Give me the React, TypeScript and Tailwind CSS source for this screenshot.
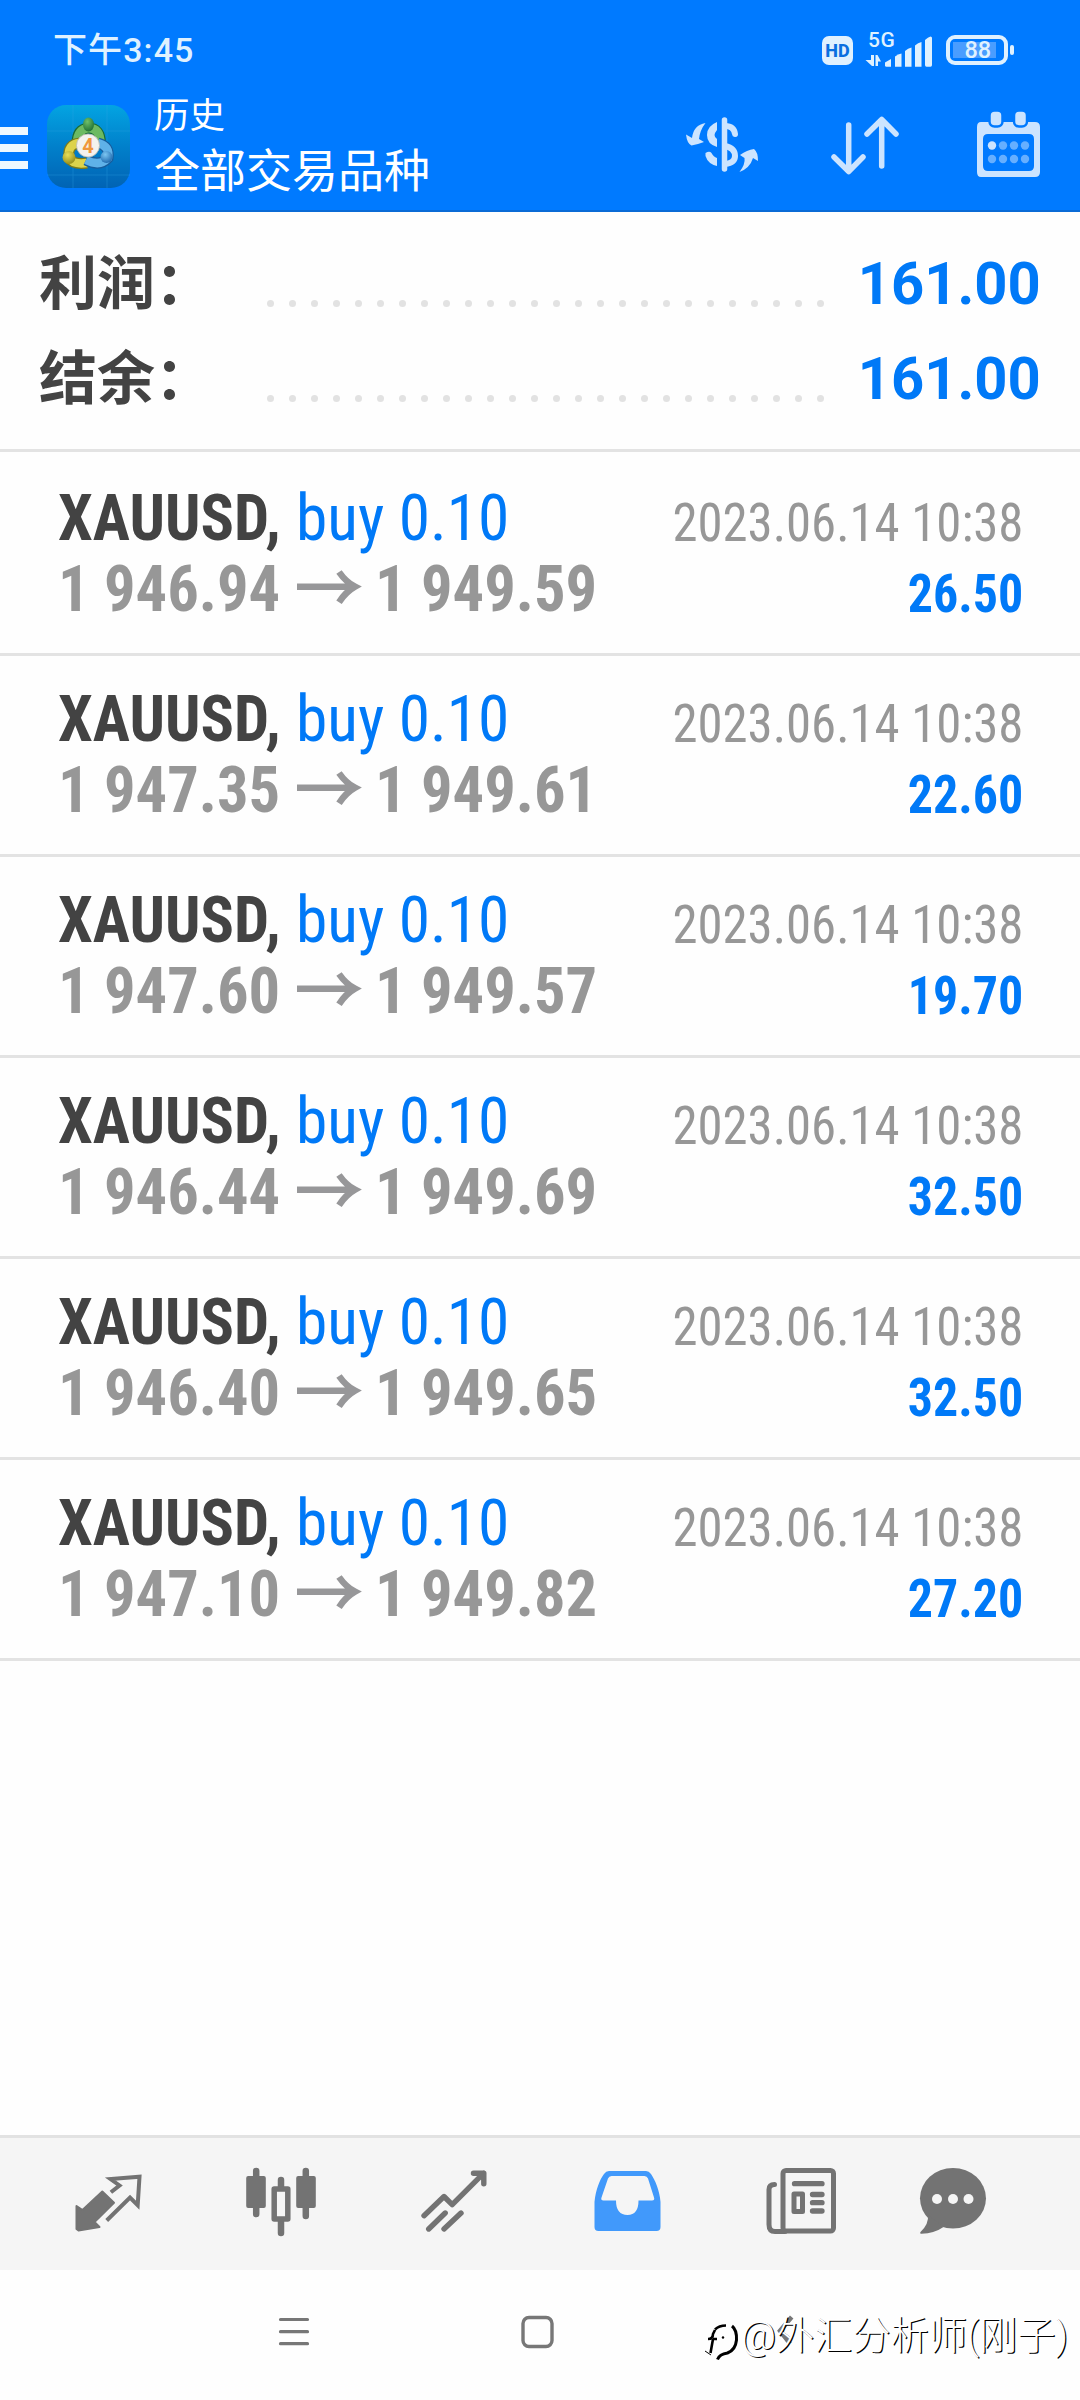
import { ReactNode } from 'react';

interface Deal {
  symbol: string;
  volume: string;
  open: string;
  close: string;
  time: string;
  profit: string;
}

const deals: Deal[] = [
  { symbol: 'XAUUSD', volume: 'buy 0.10', open: '1 946.94', close: '1 949.59', time: '2023.06.14 10:38', profit: '26.50' },
  { symbol: 'XAUUSD', volume: 'buy 0.10', open: '1 947.35', close: '1 949.61', time: '2023.06.14 10:38', profit: '22.60' },
  { symbol: 'XAUUSD', volume: 'buy 0.10', open: '1 947.60', close: '1 949.57', time: '2023.06.14 10:38', profit: '19.70' },
  { symbol: 'XAUUSD', volume: 'buy 0.10', open: '1 946.44', close: '1 949.69', time: '2023.06.14 10:38', profit: '32.50' },
  { symbol: 'XAUUSD', volume: 'buy 0.10', open: '1 946.40', close: '1 949.65', time: '2023.06.14 10:38', profit: '32.50' },
  { symbol: 'XAUUSD', volume: 'buy 0.10', open: '1 947.10', close: '1 949.82', time: '2023.06.14 10:38', profit: '27.20' },
];

const summary = [
  { label: '利润：', value: '161.00' },
  { label: '结余：', value: '161.00' },
];

function StatusBar() {
  return (
    <div className="flex h-[88px] items-center pt-3 pl-[53px] pr-[65px] text-[#dff1ff]">
      <span className="text-[34px] leading-none font-medium tracking-[1.1px]">下午3:45</span>
      <div className="ml-auto flex items-center">
        <div className="flex h-[29px] w-[31px] items-center justify-center rounded-[7px] bg-[#dff1ff] text-[18px] font-extrabold text-[#0a6fe0]">
          HD
        </div>
        <svg width="70" height="52" viewBox="864 22 70 52" className="ml-[11px]" fill="#dff1ff">
          <text x="868" y="45" fontSize="21" fontFamily="Roboto, sans-serif" fontWeight="500" letterSpacing="0.500">5G</text>
          <path d="M871 53h3v11h-2l-6.500-6h5.500z M875.500 53h2l3.500 6.500h-3v4.500h-2.500z" />
          <path d="M885 60.500l6-3.500v7.700h-4.500q-1.500 0-1.500-1.500z" />
          <path d="M895 54.500q3-2.500 6.500-3v13.200h-6.500z" />
          <path d="M905 49q3-3 6.500-3.500v19.200h-6.500z" />
          <path d="M915 43.500q3-3 6.500-3.500v24.700h-6.500z" />
          <path d="M925 38q3-3 5.500-3.500q1.500 0 1.500 1.500v27q0 1.700-1.500 1.700h-4q-1.500 0-1.500-1.700z" />
        </svg>
        <svg width="70" height="32" viewBox="945 33 70 32" className="ml-[11px]">
          <rect x="948" y="36" width="58" height="26" rx="7" fill="none" stroke="#dff1ff" strokeWidth="4" />
          <rect x="953" y="41" width="43" height="16" fill="#4a9dff" />
          <rect x="1010" y="44" width="4" height="10" rx="2" fill="#dff1ff" />
          <text x="964.500" y="57.300" fontSize="23.500" fontFamily="Roboto, sans-serif" fontWeight="500" fill="#dff1ff">88</text>
        </svg>
      </div>
    </div>
  );
}

function AppLogo() {
  return (
    <svg width="84" height="84" viewBox="46 105 84 84">
      <defs>
        <linearGradient id="logoBg" x1="0" y1="0" x2="0" y2="1">
          <stop offset="0" stopColor="#03a4e2" />
          <stop offset="0.500" stopColor="#0180cb" />
          <stop offset="1" stopColor="#0163b4" />
        </linearGradient>
        <radialGradient id="logoGreen" cx="0.400" cy="0.300" r="0.800">
          <stop offset="0" stopColor="#6fc06a" />
          <stop offset="1" stopColor="#17682f" />
        </radialGradient>
        <radialGradient id="logoYellow" cx="0.400" cy="0.300" r="0.800">
          <stop offset="0" stopColor="#e8df5a" />
          <stop offset="1" stopColor="#8c8412" />
        </radialGradient>
        <radialGradient id="logoBlue" cx="0.400" cy="0.300" r="0.800">
          <stop offset="0" stopColor="#7cc6f2" />
          <stop offset="1" stopColor="#1560a8" />
        </radialGradient>
      </defs>
      <rect x="47" y="105" width="83" height="83" rx="19" fill="url(#logoBg)" />
      <path d="M73 105v83M107 105v83M47 131h83M47 175h83" stroke="#35a6e6" strokeWidth="1" opacity="0.300" />
      <g fill="none">
        <path d="M77 144q0-15 11.500-16q12 0 12 16" stroke="#1b6b33" strokeWidth="11" />
        <path d="M77 144q0-15 11.500-16q12 0 12 16" stroke="#6cba62" strokeWidth="8.500" />
        <path d="M80 143q-13 1-11 15q4 7 18 5" stroke="#7d7a18" strokeWidth="11" />
        <path d="M80 143q-13 1-11 15q4 7 18 5" stroke="#ddd34c" strokeWidth="8.500" />
        <path d="M98 143q12 3 10 15q-8 9-22 2" stroke="#175c9c" strokeWidth="11" />
        <path d="M98 143q12 3 10 15q-8 9-22 2" stroke="#5fb1e8" strokeWidth="8.500" />
      </g>
      <ellipse cx="88.500" cy="124.500" rx="5.500" ry="7" fill="url(#logoGreen)" />
      <circle cx="69" cy="157.500" r="6.500" fill="url(#logoYellow)" />
      <circle cx="106.500" cy="157" r="6" fill="url(#logoBlue)" />
      <circle cx="88" cy="145.500" r="11.500" fill="#f4f2ee" stroke="#b9b9b0" strokeWidth="0.800" />
      <text x="88" y="152.500" textAnchor="middle" fontSize="20" fontWeight="700" fontFamily="Roboto, sans-serif" fill="#f0973c">4</text>
    </svg>
  );
}

function Toolbar() {
  return (
    <div className="flex h-[122px] items-start pt-[6px] text-white">
      <div className="mt-[33px] flex w-7 flex-col gap-[9px]">
        <span className="h-2 bg-[#eef8ff]" />
        <span className="h-2 bg-[#eef8ff]" />
        <span className="h-2 bg-[#eef8ff]" />
      </div>
      <div className="mt-[11px] ml-[18px]">
        <AppLogo />
      </div>
      <div className="ml-6 flex flex-col pt-[2px]">
        <span className="h-[45px] text-[35.500px] leading-[40px]">历史</span>
        <span className="text-[46px] leading-[60px]">全部交易品种</span>
      </div>
      <svg width="76" height="64" viewBox="684 114 76 64" className="mt-5 ml-auto" fill="#cce4ff">
        <path d="M705.500 123q-12 2-13.500 15l-6-3.500q1 9 5.500 11q6-1 12.500-3.500l-5-3q1-9 6.500-16z" />
        <path d="M717 122v8q-5 6 0 9v8q-10-3-10-12q0-9 10-13z" />
        <path d="M705.500 153q4-2.500 6 0q2 4 5.500 5v8q-9-2-11.500-10z" />
        <path d="M724.500 120v49" stroke="#cce4ff" strokeWidth="5.500" strokeLinecap="round" />
        <path d="M725 126q9 0 10 8" fill="none" stroke="#cce4ff" strokeWidth="6" strokeLinecap="round" />
        <path d="M725 146q10 2 10 10q0 7-10 8" fill="none" stroke="#cce4ff" strokeWidth="6" />
        <path d="M739.500 172q6-8 5-14l-4.500-3q7-5 14-6q4 3 4 12l-5-3q-3 10-13.500 14z" />
      </svg>
      <svg width="68" height="60" viewBox="831 116 68 60" className="mt-[22px] ml-[71px]" fill="none" stroke="#cce4ff" strokeWidth="5.500" strokeLinecap="round" strokeLinejoin="round">
        <path d="M848.700 125v46M834 157l14.700 14.500L863 157" />
        <path d="M881.700 166v-46M867 134l14.700-14.500L896 134" />
      </svg>
      <svg width="64" height="67" viewBox="977 111 64 67" className="mt-[17px] mr-[39px] ml-[78px]">
        <path d="M981 122h54q5 0 5 5v45q0 5-5 5h-54q-4 0-4-5v-45q0-5 4-5z M988 134q-5 0-5 5v27q0 5 5 5h41q5 0 5-5v-27q0-5-5-5z" fill="#cce4ff" fillRule="evenodd" />
        <rect x="989.500" y="110.500" width="13" height="16" rx="5" fill="#cce4ff" stroke="#007aff" strokeWidth="2.500" />
        <rect x="1014" y="110.500" width="13" height="16" rx="5" fill="#cce4ff" stroke="#007aff" strokeWidth="2.500" />
        {[992, 1003, 1014, 1025].map((x, i) => (
          <g key={x}>
            <circle cx={x} cy="145.500" r="4.200" fill={i === 0 ? '#cce4ff' : '#66afff'} />
            <circle cx={x} cy="159" r="4.200" fill="#66afff" />
          </g>
        ))}
      </svg>
    </div>
  );
}

function SummaryRow({ label, value }: { label: string; value: string }) {
  return (
    <div className="flex h-[95px] items-center pr-[39px] pl-[39px]">
      <span className="w-[228px] pt-px text-[58px] leading-none font-bold text-[#434343]">{label}</span>
      <div className="mt-[39px] flex w-[557px] justify-between">
        {Array.from({ length: 26 }, (_, i) => (
          <span key={i} className="size-[7px] rounded-full bg-[#e2e2e2]" />
        ))}
      </div>
      <span className="mt-[2px] ml-auto origin-right scale-x-[0.99] text-[58.500px] leading-none font-bold text-[#0079f7]">{value}</span>
    </div>
  );
}

function DealRow({ deal }: { deal: Deal }) {
  return (
    <div className="flex h-[201px] justify-between border-b-[3px] border-[#e3e3e3] pr-[57px] pl-[58px] font-stretch-condensed">
      <div className="pt-7 text-[65px] leading-[71px] whitespace-nowrap">
        <div className="flex">
          <span className="w-[238px] origin-left scale-x-[0.957] font-bold text-[#434343]">{deal.symbol},</span>
          <span className="origin-left scale-x-[0.975] text-[#0079f7]">{deal.volume}</span>
        </div>
        <div className="flex font-bold text-[#979797]">
          <span className="w-[238px] origin-left scale-x-[0.962]">{deal.open}</span>
          <svg width="66" height="44" viewBox="297 564 66 44" className="mt-[11px]" fill="none" stroke="#979799" strokeWidth="6.500">
            <path d="M298 585.700h58M340 571q7 10 16 14.700q-9 5-16 15.500" />
          </svg>
          <span className="ml-[13px] origin-left scale-x-[0.962]">{deal.close}</span>
        </div>
      </div>
      <div className="pt-8 text-right text-[54px] leading-[71px] whitespace-nowrap">
        <div className="origin-right scale-x-[0.94] text-[#979797]">{deal.time}</div>
        <div className="origin-right scale-x-[0.925] font-bold text-[#0079f7]">{deal.profit}</div>
      </div>
    </div>
  );
}

function NavIcon({ box, className, children }: { box: string; className?: string; children: ReactNode }) {
  return (
    <svg width="72" height="72" viewBox={box} className={className} fill="none" strokeLinecap="round" strokeLinejoin="round">
      {children}
    </svg>
  );
}

function BottomNav() {
  return (
    <nav className="flex h-[135px] border-t-[3px] border-[#e2e2e2] bg-[#f5f5f5] pt-[28px] pl-[72px]">
      <NavIcon box="72 2166 72 72">
        <path d="M76.500 2206l6 4L102.300 2191.500l11.700 11.200L94.500 2222l5 5l-21 3.500l-2-1.500z" fill="#737373" stroke="#737373" strokeWidth="2" />
        <path d="M110.900 2192.300l8.600-6.800L110.500 2179l29-2.300l-1.800 28.500l-7.700-7.700l-23.300 23" stroke="#737373" strokeWidth="4" strokeLinecap="butt" strokeLinejoin="miter" />
      </NavIcon>
      <NavIcon box="244 2166 72 72" className="ml-[100px]">
        <path d="M256.200 2171v43M281 2180v53M305.800 2171v45" stroke="#737373" strokeWidth="6.500" />
        <rect x="246.200" y="2176" width="19.600" height="32" rx="2" fill="#737373" />
        <rect x="296.200" y="2176" width="19.600" height="32" rx="2" fill="#737373" />
        <rect x="274.200" y="2189" width="13.600" height="30" fill="#f5f5f5" stroke="#737373" strokeWidth="5.500" />
      </NavIcon>
      <NavIcon box="418 2166 72 72" className="ml-[102px]">
        <path d="M424 2215.700l20-19.200l8.200 8.200l31.500-31.500M473.500 2173.200h10.300v10.500M428.700 2229l16.500-16M444 2229l17-16" stroke="#737373" strokeWidth="5.400" />
      </NavIcon>
      <NavIcon box="591 2166 72 72" className="ml-[101px]">
        <path
          d="M594.500 2202C595.500 2190 600 2179 604 2174Q606 2171 609 2171H646Q649 2171 651 2174C655 2180 659.500 2190 660.500 2202V2227Q660.500 2231 656.500 2231H598.500Q594.500 2231 594.500 2227Z M611.500 2176Q609 2176 608 2178.500L601.500 2197.500Q600.500 2200.500 603.500 2200.500H616Q616 2215 627.500 2215Q638.500 2215 638.500 2200.500H652Q655 2200.500 654 2197.500L648 2178.500Q647 2176 644.500 2176Z"
          fill="#4199fb"
          fillRule="evenodd"
        />
      </NavIcon>
      <NavIcon box="765 2166 72 72" className="ml-[102px]">
        <rect x="783" y="2170.500" width="50.500" height="60.500" rx="3" stroke="#737373" strokeWidth="5" />
        <path d="M774.500 2184.500q-5.500 0-5.500 5v35q0 7 6 7h10" stroke="#737373" strokeWidth="5" />
        <path d="M794.500 2183.700h27.500M812.500 2194.500h9.500M812.500 2202.700h9.500M812.500 2211h9.500" stroke="#737373" strokeWidth="5.300" />
        <rect x="794" y="2194" width="8.500" height="17.500" stroke="#737373" strokeWidth="5" />
      </NavIcon>
      <NavIcon box="917 2166 72 72" className="ml-20">
        <ellipse cx="953" cy="2198.300" rx="33" ry="30.300" fill="#737373" />
        <path d="M928 2215q1 9-7.500 17q-1 1.800 1 1.800q13-.5 22-6.800z" fill="#737373" />
        <circle cx="937" cy="2199" r="5" fill="#f5f5f5" />
        <circle cx="953" cy="2199" r="5" fill="#f5f5f5" />
        <circle cx="968.500" cy="2199" r="5" fill="#f5f5f5" />
      </NavIcon>
    </nav>
  );
}

function SystemBar() {
  return (
    <div className="relative flex h-[130px] bg-[#fefefe] pt-[42px] pl-[278px]">
      <svg width="32" height="40" viewBox="278 2312 32 40" stroke="#777" strokeWidth="3.200" strokeLinecap="round">
        <path d="M280.500 2319.500h27M280.500 2331.700h27M280.500 2343.700h27" />
      </svg>
      <svg width="36" height="40" viewBox="519 2312 36 40" className="ml-[209px]" fill="none" stroke="#777" strokeWidth="3.400">
        <rect x="523" y="2317.500" width="29" height="29" rx="6" />
      </svg>
      <svg width="22" height="40" viewBox="775 2312 22 40" className="ml-[220px]" fill="none" stroke="#777" strokeWidth="4.500">
        <path d="M791.700 2317l-11.700 13.700l10 13" />
      </svg>
      {/* author signature lies over the system buttons */}
      <div className="absolute top-[37px] left-[703px] flex items-center text-white">
        <svg width="38" height="44" viewBox="704 2322 38 44" className="mt-[13px]" fill="none" strokeWidth="2.600" stroke="#000">
          <path d="M716 2331.500q4-4 11-4M709 2341q5 0 5-5l2-4M714 2341l-2.500 14M718 2341h-4" />
          <path d="M706 2353l6 4" strokeWidth="1" />
          <path d="M733 2328q5 4 4.500 14q-1 10-9 13q-8 1-10 6.500" strokeWidth="3" />
          <circle cx="724" cy="2339.500" r="1.200" fill="#000" stroke="none" />
        </svg>
        <span className="text-[38.200px] leading-[44px] font-light whitespace-nowrap [text-shadow:1.300px_1.300px_0_#000]">@外汇分析师(刚子)</span>
      </div>
    </div>
  );
}

export default function App() {
  return (
    <div className="flex h-[2400px] w-[1080px] flex-col overflow-hidden bg-[#fefefe] font-['Roboto','Noto_Sans_CJK_SC',sans-serif]">
      <header className="h-[212px] border-b-2 border-[#0a6bd6] bg-[#007aff]">
        <StatusBar />
        <Toolbar />
      </header>
      <section className="mb-[3px] h-[240px] border-b-[3px] border-[#e3e3e3] pt-6">
        {summary.map(row => (
          <SummaryRow key={row.label} {...row} />
        ))}
      </section>
      <main className="flex-1">
        {deals.map((deal, i) => (
          <DealRow key={i} deal={deal} />
        ))}
      </main>
      <BottomNav />
      <SystemBar />
    </div>
  );
}
